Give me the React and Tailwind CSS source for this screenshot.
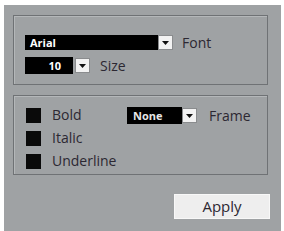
const sans = { fontFamily: '"Open Sans", "Liberation Sans", sans-serif' };

function Arrow() {
  return (
    <div className="w-[15px] h-[15px] bg-[#f2f2f2] border border-[#8a8c8e] flex items-center justify-center">
      <svg width="7" height="4" viewBox="0 0 7 4">
        <path d="M0 0H7L3.5 4Z" fill="#111" />
      </svg>
    </div>
  );
}

function Check({ label }) {
  return (
    <div className="flex items-center h-[16px]">
      <div className="w-[15px] h-[15px] bg-[#0a0a0a]" />
      <span className="ml-[11px] text-[14px] leading-[16px] text-[#2c2832]">{label}</span>
    </div>
  );
}

export default function App() {
  return (
    <div className="w-[284px] h-[231px] bg-white pt-[5px] pl-[4px] pr-[3px]" style={sans}>
      <div className="h-full bg-[#9fa2a4] pl-[9px] pr-[13px] pt-[10px]">
        {/* Font / Size */}
        <div className="h-[70px] border border-[#6f7275] shadow-[inset_1px_1px_0_#b4b7b9] pl-[11px] pt-[19px]">
          <div className="flex items-center h-[15px]">
            <div className="w-[133px] h-[15px] bg-black text-white text-[11px] font-bold leading-[15px] pl-[5px]">Arial</div>
            <Arrow />
            <span className="ml-[9px] text-[14px] leading-[15px] text-[#2c2832]">Font</span>
          </div>
          <div className="flex items-center h-[17px] mt-[7px]">
            <div className="w-[48px] h-[17px] bg-black text-white text-[11px] font-bold leading-[17px] text-right pr-[12px]">10</div>
            <div className="ml-[2px]"><Arrow /></div>
            <span className="ml-[10px] text-[14px] leading-[17px] text-[#2c2832]">Size</span>
          </div>
        </div>

        {/* Style / Frame */}
        <div className="mt-[10px] h-[80px] border border-[#6f7275] shadow-[inset_1px_1px_0_#b4b7b9] pl-[12px] pt-[11px] flex">
          <div className="w-[101px] flex flex-col gap-[7px]">
            <Check label="Bold" />
            <Check label="Italic" />
            <Check label="Underline" />
          </div>
          <div className="flex items-start">
            <div className="flex items-center h-[17px]">
              <div className="w-[55px] h-[17px] bg-black text-[#e6e6e6] text-[11px] font-bold leading-[17px] pl-[6px]">None</div>
              <Arrow />
              <span className="ml-[12px] text-[14px] leading-[17px] text-[#2c2832]">Frame</span>
            </div>
          </div>
        </div>

        <div className="flex justify-end mt-[19px] -mr-[2px]">
          <button className="w-[96px] h-[25px] bg-[#eeeeee] border border-[#f8f8f8] text-[15px] text-[#2c2832]">Apply</button>
        </div>
      </div>
    </div>
  );
}
